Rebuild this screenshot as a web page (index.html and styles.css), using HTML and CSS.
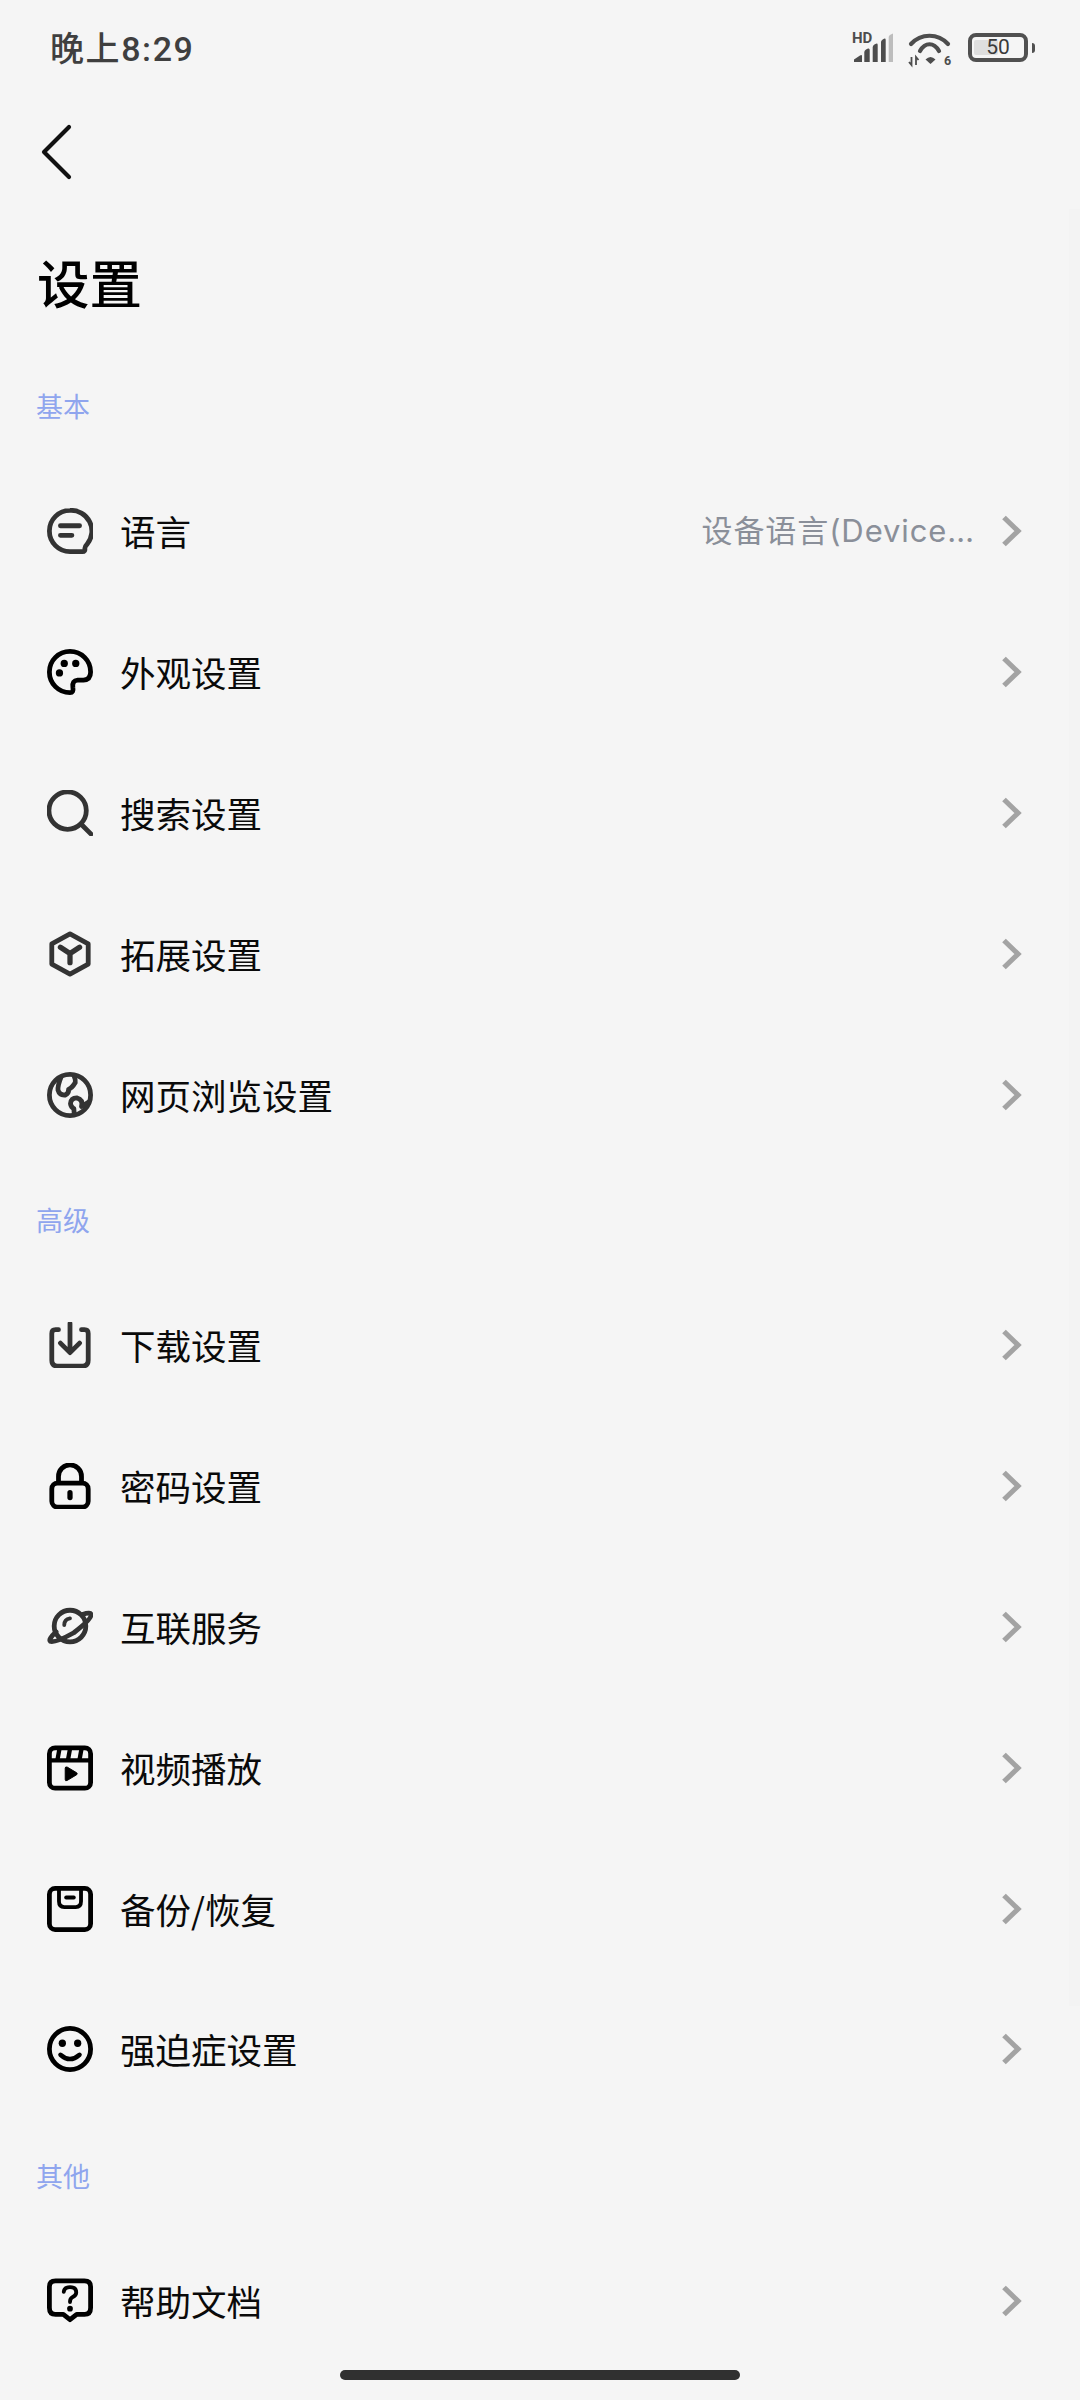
FILE: index.html
```html
<!DOCTYPE html>
<html lang="zh-CN">
<head>
<meta charset="utf-8">
<title>设置</title>
<link rel="stylesheet" href="styles.css">
</head>
<body>
<div class="page">
  <div class="status">
    <span class="time">晚上8:29</span>
    <div class="status-icons">
      <svg class="sig" viewBox="0 -6 42 38" width="42" height="38">
        <text x="0" y="11" class="hd">HD</text>
        <path d="M2 30 V27.5 L8 23.5 Q10 22.5 10 24 V30 Z M12.3 30 V20 Q12.3 18.5 14 17.5 L16 16.5 Q17.7 16 17.7 18 V30 Z M20.7 30 V15 Q20.7 13.5 22.4 12.5 L24 11.7 Q25.7 11 25.7 13 V30 Z M29 30 V10 Q29 8.5 30.7 7.5 L32 6.7 Q33.7 6 33.7 8 V30 Z" fill="#4d4d4d"/>
        <path d="M36.7 30 V5 Q36.7 3.5 38.4 2.7 L41 1.5 V30 Z" fill="#bdbdbd"/>
      </svg>
      <svg class="wifi" viewBox="0 0 44 38" width="44" height="38">
        <path d="M3 11 C13 0 30 0 40 11 M12 18 C17 9 26 9 31 18" fill="none" stroke="#4d4d4d" stroke-width="4.2" stroke-linecap="round"/>
        <path d="M17.500 26.500 Q22.500 21.500 27.500 26.500 L22.500 31 Z" fill="#4d4d4d"/>
        <path d="M3.500 24 V32 M1 29 L3.500 32 L3.500 29 M8 32 V24 M8 27 L8 24 L10.500 27" fill="none" stroke="#4d4d4d" stroke-width="1.800"/>
        <text x="36" y="32" class="six">6</text>
      </svg>
      <div class="batt">
        <div class="batt-body"><span class="batt-fill"></span><span class="batt-num">50</span></div>
        <span class="batt-tip"></span>
      </div>
    </div>
  </div>

  <div class="nav">
    <svg viewBox="0 0 32 56" width="32" height="56"><path d="M29 3 L4 28 L29 53" fill="none" stroke="#111" stroke-width="4.200" stroke-linecap="round" stroke-linejoin="round"/></svg>
  </div>
  <h1 class="title">设置</h1>

  <div class="section first">基本</div>
  <div class="row"><span class="ico"><svg viewBox="0 0 48 48"><path d="M24 2.500 A21.500 21.500 0 1 0 24 45.500 L37 45.500 Q40 45.500 39.500 42 Q39.500 40 42 37.500 A21.500 21.500 0 0 0 24 2.500 Z" fill="none" stroke="#333" stroke-width="5"/><path d="M14 18.500 H34 M14 28.500 H26" fill="none" stroke="#333" stroke-width="5" stroke-linecap="round"/></svg></span><span class="label">语言</span><span class="value">设备语言(Device…</span><svg class="chev" viewBox="0 0 22 32"><path d="M3 2.500 L17 16 L3 29.500" fill="none" stroke="#a3a3a3" stroke-width="5.200"/></svg></div>
  <div class="row"><span class="ico"><svg viewBox="0 0 48 48"><path d="M24 2.500 C12 2.500 2.500 12 2.500 24 C2.500 36 12 45.500 24 45.500 Q28 45.500 27 40 Q26 33 32 32.500 H38 Q45.500 32 45.500 24 C45.500 12 36 2.500 24 2.500 Z" fill="none" stroke="#000" stroke-width="5"/><circle cx="18" cy="15" r="3.800"/><circle cx="30" cy="15" r="3.800"/><circle cx="13" cy="25" r="3.800"/></svg></span><span class="label">外观设置</span><svg class="chev" viewBox="0 0 22 32"><path d="M3 2.500 L17 16 L3 29.500" fill="none" stroke="#a3a3a3" stroke-width="5.200"/></svg></div>
  <div class="row"><span class="ico"><svg viewBox="0 0 48 48"><circle cx="21.500" cy="21.500" r="19.500" fill="none" stroke="#333" stroke-width="5"/><path d="M36.500 36.500 L46 46" fill="none" stroke="#333" stroke-width="5" stroke-linecap="round"/></svg></span><span class="label">搜索设置</span><svg class="chev" viewBox="0 0 22 32"><path d="M3 2.500 L17 16 L3 29.500" fill="none" stroke="#a3a3a3" stroke-width="5.200"/></svg></div>
  <div class="row"><span class="ico"><svg viewBox="0 0 48 48"><path d="M24 3 L43 13.500 V34.500 L24 45 L5 34.500 V13.500 Z" fill="none" stroke="#333" stroke-width="5" stroke-linejoin="round"/><path d="M14 17 L24 23.500 L34 17 M24 23.500 V33" fill="none" stroke="#333" stroke-width="5.500" stroke-linecap="round" stroke-linejoin="round"/></svg></span><span class="label">拓展设置</span><svg class="chev" viewBox="0 0 22 32"><path d="M3 2.500 L17 16 L3 29.500" fill="none" stroke="#a3a3a3" stroke-width="5.200"/></svg></div>
  <div class="row"><span class="ico"><svg viewBox="0 0 48 48"><circle cx="24" cy="24" r="21.500" fill="none" stroke="#333" stroke-width="5"/><path d="M15 4.500 Q11 14 11.500 19 Q13 24.500 19 24 Q23 22 22.500 18 Q26 17 29.500 11 Q30 8 28 3.500 M44 31 L36 36 Q38 29 31 27 Q25 27 24.500 33 Q25 37 28 38 L28.500 45" fill="none" stroke="#333" stroke-width="5" stroke-linejoin="round"/></svg></span><span class="label">网页浏览设置</span><svg class="chev" viewBox="0 0 22 32"><path d="M3 2.500 L17 16 L3 29.500" fill="none" stroke="#a3a3a3" stroke-width="5.200"/></svg></div>

  <div class="section adv">高级</div>
  <div class="row"><span class="ico"><svg viewBox="0 0 48 48"><path d="M12 8 H9 Q5 8 5 12 V40 Q5 46 11 46 H37 Q43 46 43 40 V12 Q43 8 39 8 H36" fill="none" stroke="#333" stroke-width="5" stroke-linecap="round"/><path d="M24 1.500 V31 M14 22 L24 32 L34 22" fill="none" stroke="#333" stroke-width="5" stroke-linecap="round" stroke-linejoin="round"/></svg></span><span class="label">下载设置</span><svg class="chev" viewBox="0 0 22 32"><path d="M3 2.500 L17 16 L3 29.500" fill="none" stroke="#a3a3a3" stroke-width="5.200"/></svg></div>
  <div class="row"><span class="ico"><svg viewBox="0 0 48 48"><rect x="5" y="21" width="38" height="25" rx="6" fill="none" stroke="#000" stroke-width="5"/><path d="M12 21 V14 A12 12 0 0 1 36 14 V21" fill="none" stroke="#000" stroke-width="5"/><path d="M24 31 V36" stroke="#000" stroke-width="5.500" stroke-linecap="round"/></svg></span><span class="label">密码设置</span><svg class="chev" viewBox="0 0 22 32"><path d="M3 2.500 L17 16 L3 29.500" fill="none" stroke="#a3a3a3" stroke-width="5.200"/></svg></div>
  <div class="row"><span class="ico"><svg viewBox="0 0 48 48"><circle cx="24" cy="23" r="16.500" fill="none" stroke="#333" stroke-width="5"/><path d="M37 11 Q46 8 46 11.500 Q46 16 28 30 Q8 41 3.500 39 Q1 37 9.500 29" fill="none" stroke="#333" stroke-width="5" stroke-linecap="round"/><path d="M18 22 Q18 16 24 15" fill="none" stroke="#333" stroke-width="4" stroke-linecap="round"/></svg></span><span class="label">互联服务</span><svg class="chev" viewBox="0 0 22 32"><path d="M3 2.500 L17 16 L3 29.500" fill="none" stroke="#a3a3a3" stroke-width="5.200"/></svg></div>
  <div class="row"><span class="ico"><svg viewBox="0 0 48 48"><rect x="2.500" y="3" width="43" height="42" rx="6" fill="none" stroke="#000" stroke-width="5"/><path d="M2.500 16 H45.500" stroke="#000" stroke-width="4.500"/><path d="M13 4 L11 15 M24 4 L22 15 M36 4 L34 15" stroke="#000" stroke-width="4.500"/><path d="M19 24 Q19 22.500 21 23 L31 29 Q32 30 31 31 L21 37 Q19 38 19 36 Z" fill="#000" stroke="#000" stroke-width="1"/></svg></span><span class="label">视频播放</span><svg class="chev" viewBox="0 0 22 32"><path d="M3 2.500 L17 16 L3 29.500" fill="none" stroke="#a3a3a3" stroke-width="5.200"/></svg></div>
  <div class="row"><span class="ico"><svg viewBox="0 0 48 48"><rect x="2.500" y="2.500" width="43" height="43" rx="6" fill="none" stroke="#000" stroke-width="5"/><path d="M12.500 3 V16 Q12.500 22 18 22 H30 Q35.500 22 35.500 16 V3" fill="none" stroke="#000" stroke-width="4"/><path d="M20 12 H28" stroke="#000" stroke-width="4" stroke-linecap="round"/></svg></span><span class="label">备份/恢复</span><svg class="chev" viewBox="0 0 22 32"><path d="M3 2.500 L17 16 L3 29.500" fill="none" stroke="#a3a3a3" stroke-width="5.200"/></svg></div>
  <div class="row"><span class="ico"><svg viewBox="0 0 48 48"><circle cx="24" cy="24" r="21.500" fill="none" stroke="#000" stroke-width="5"/><circle cx="16" cy="18" r="3.800"/><circle cx="32" cy="18" r="3.800"/><path d="M14 30 Q24 39 34 30" fill="none" stroke="#000" stroke-width="4.600" stroke-linecap="round"/></svg></span><span class="label">强迫症设置</span><svg class="chev" viewBox="0 0 22 32"><path d="M3 2.500 L17 16 L3 29.500" fill="none" stroke="#a3a3a3" stroke-width="5.200"/></svg></div>

  <div class="section other">其他</div>
  <div class="row"><span class="ico"><svg viewBox="0 0 48 48"><path d="M9 3 H39 Q45.500 3 45.500 9 V31 Q45.500 38 39 38 H31 L24 43.500 L17 38 H9 Q2.500 38 2.500 31 V9 Q2.500 3 9 3 Z" fill="none" stroke="#000" stroke-width="5" stroke-linejoin="round"/><path d="M17.500 14.500 Q18 9.500 24 9.500 Q30.500 9.500 30.500 15 Q30.500 18 26.500 20 Q24 21.500 24 25" fill="none" stroke="#000" stroke-width="4" stroke-linecap="round"/><circle cx="24" cy="32" r="3"/></svg></span><span class="label">帮助文档</span><svg class="chev" viewBox="0 0 22 32"><path d="M3 2.500 L17 16 L3 29.500" fill="none" stroke="#a3a3a3" stroke-width="5.200"/></svg></div>

  <div class="scroll-thumb"></div>
  <div class="home"></div>
</div>
</body>
</html>
```

FILE: styles.css
```css
* { box-sizing: border-box; }
html, body { margin: 0; padding: 0; }
body { background: #f5f5f5; font-family: "Noto Sans CJK SC", "Noto Sans", sans-serif; color: #000; }
.page { position: relative; width: 1080px; height: 2400px; overflow: hidden; background: #f5f5f5; }

.status { height: 96px; padding: 26px 0 0 50px; display: flex; justify-content: space-between; align-items: flex-start; }
.time { font-size: 34px; line-height: 46px; font-weight: 500; color: #3f3f3f; letter-spacing: 1.6px; font-family: "Roboto", "Noto Sans CJK SC", sans-serif; }
.status-icons { display: flex; align-items: flex-start; gap: 14px; padding-right: 45px; }
.sig { margin-top: 0; }
.wifi { margin-top: 7px; }
.hd { font: 700 15px "Roboto", sans-serif; fill: #4d4d4d; }
.six { font: 700 12.500px "Roboto", sans-serif; fill: #4d4d4d; }
.batt { display: flex; align-items: center; gap: 4px; margin: 7px 0 0 2px; }
.batt-body { position: relative; width: 60px; height: 29px; border: 4px solid #505050; border-radius: 8px; display: flex; align-items: center; justify-content: center; }
.batt-fill { position: absolute; left: 2px; top: 3px; bottom: 3px; width: 24px; background: #dedede; border-radius: 2px; }
.batt-num { position: relative; font: 400 21px/21px "Roboto", sans-serif; color: #3a3a3a; }
.batt-tip { width: 3px; height: 10px; background: #505050; border-radius: 0 3px 3px 0; }

.nav { height: 72px; padding: 28px 0 0 40px; display: flex; align-items: flex-start; overflow: visible; }
.nav svg { flex: none; }
.title { margin: 0; padding-left: 37px; height: 128px; padding-top: 77px; font-size: 52.5px; line-height: 72px; font-weight: 500; }

.section { height: 108px; padding: 38px 0 0 36px; font-size: 27px; line-height: 36px; color: #8fa5ee; }
.section.first { height: 73px; padding-top: 0; margin-top: 92px; }
.section.adv { height: 110px; padding-top: 37px; }
.section.other { height: 110.5px; padding-top: 38.5px; }

.row { height: 140.8px; padding: 0 57px 0 47px; display: flex; align-items: center; }
.ico { flex: none; width: 46px; height: 46px; margin-right: 27px; display: block; }
.ico svg { display: block; width: 46px; height: 46px; }
.label { flex: none; font-size: 35.5px; line-height: 48px; color: #0a0a0a; }
.value { flex: 1; text-align: right; font-size: 31px; line-height: 44px; color: #8a8f99; padding-right: 26px; letter-spacing: .9px; font-family: "Inter", "Noto Sans CJK SC", sans-serif; }
.chev { flex: none; width: 22px; height: 32px; margin-left: auto; }
.value + .chev { margin-left: 0; }

.scroll-thumb { position: absolute; right: 0; top: 209px; width: 11px; height: 1797px; background: #f3f3f3; }
.home { position: absolute; left: 340px; bottom: 20px; width: 400px; height: 10px; border-radius: 5px; background: #303030; }
```
